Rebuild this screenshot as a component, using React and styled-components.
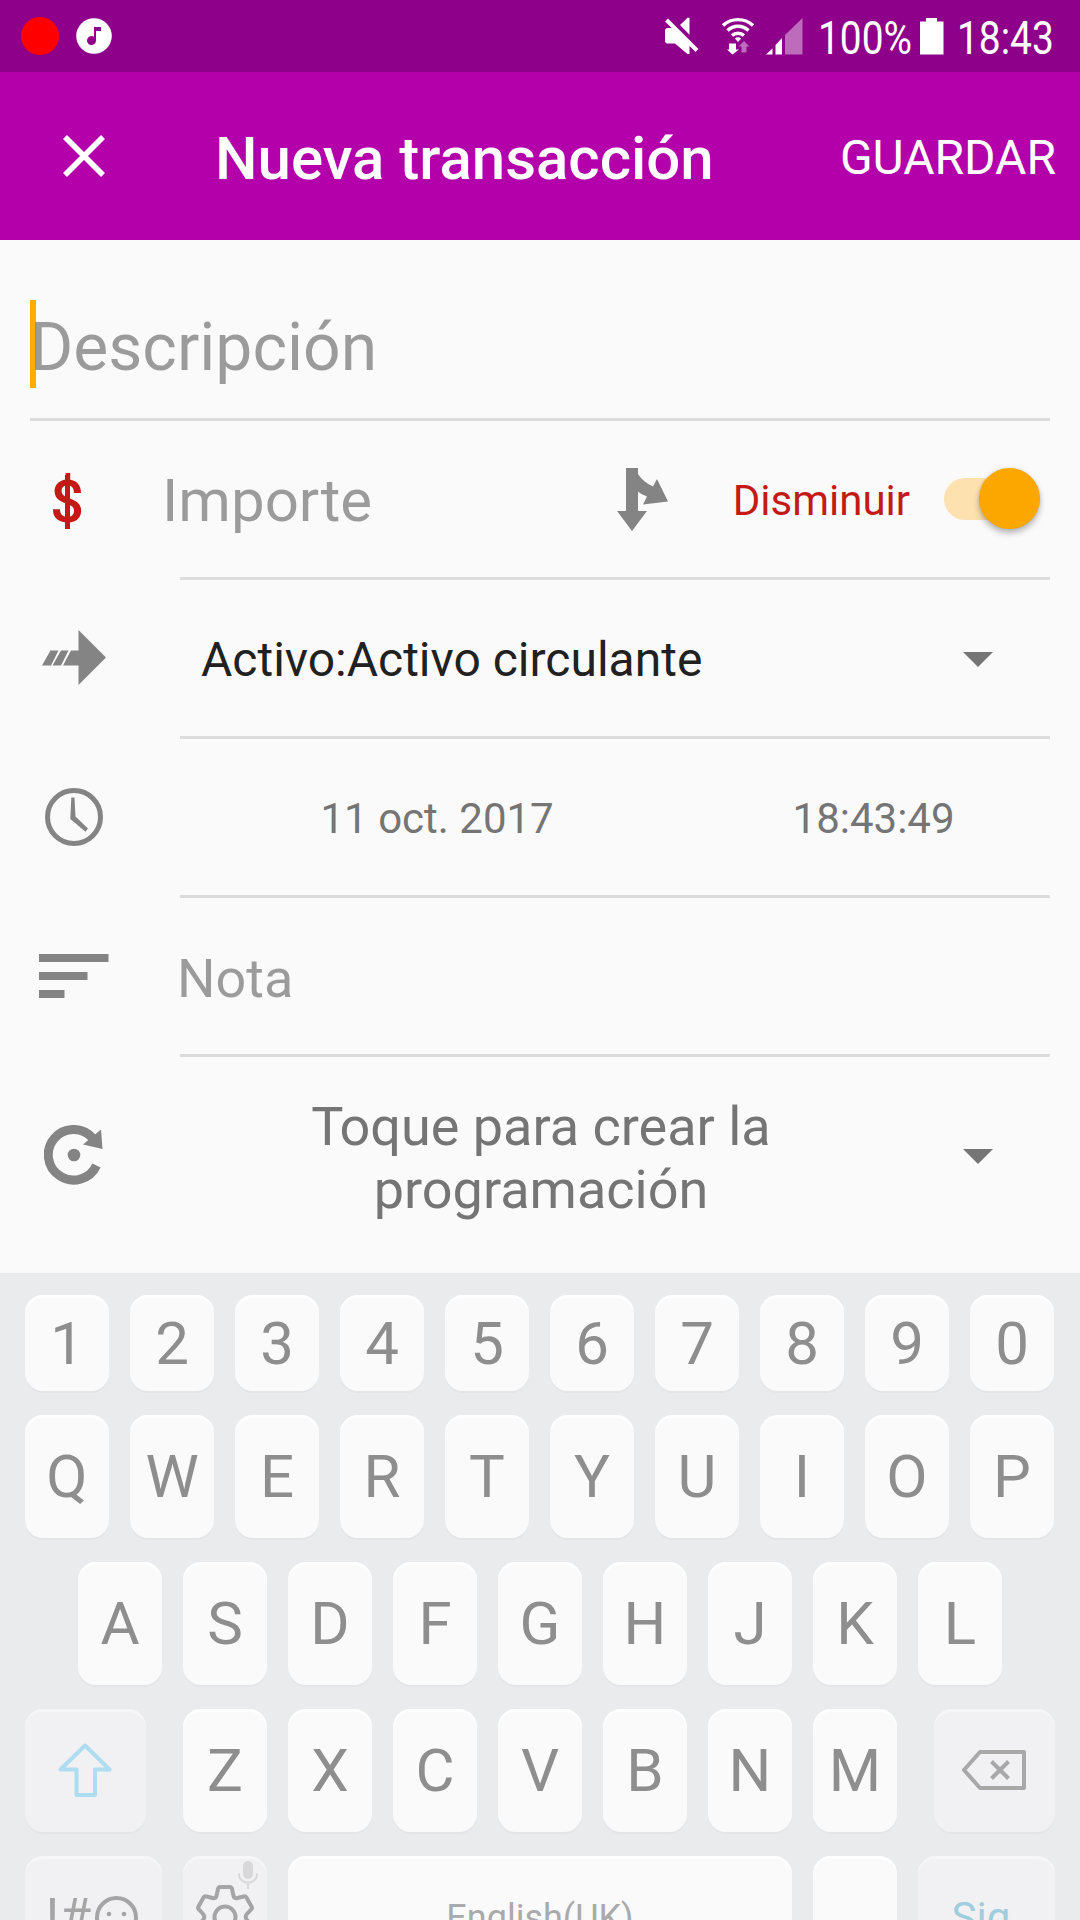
import React from "react";
import styled, { createGlobalStyle } from "styled-components";

const GlobalStyle = createGlobalStyle`
  * { box-sizing: border-box; }
  html, body { margin: 0; padding: 0; overflow: hidden; }
  body { font-family: Roboto, "Liberation Sans", sans-serif; background: #fafafa; }
  button { border: 0; padding: 0; margin: 0; background: none; font-family: inherit; color: inherit; }
  svg { display: block; flex: none; }
`;

const Screen = styled.div`
  width: 1080px;
  height: 1920px;
  overflow: hidden;
  display: flex;
  flex-direction: column;
  background: #fafafa;
`;

const StatusBar = styled.header`
  flex: none;
  height: 72px;
  padding: 0 26px 0 21px;
  display: flex;
  align-items: center;
  justify-content: space-between;
  background: #8e008a;
  color: #fff;
`;

const StatusGroup = styled.div`
  display: flex;
  align-items: center;
`;

const StatusItem = styled.span`
  display: flex;
  margin-right: ${(p) => p.$after}px;
`;

const RecordDot = styled.span`
  width: 38px;
  height: 38px;
  margin-right: 17px;
  border-radius: 50%;
  background: #f00;
`;

const StatusText = styled.span`
  width: ${(p) => p.$width}px;
  font-size: 46px;
  line-height: 72px;
  white-space: nowrap;
  transform: translateY(2px) scaleX(0.845);
  transform-origin: left center;
`;

const AppBar = styled.div`
  flex: none;
  height: 168px;
  padding: 0 24px 0 63px;
  display: flex;
  align-items: center;
  background: #b300aa;
  color: #fff;
`;

const Title = styled.h1`
  flex: 1;
  margin: 0 0 0 110px;
  padding-top: 6px;
  font-size: 60px;
  font-weight: 500;
  line-height: 70px;
  white-space: nowrap;
`;

const SaveButton = styled.button`
  font-size: 48px;
  line-height: 56px;
  padding-top: 4px;
`;

const Form = styled.main`
  flex: none;
  height: 1033px;
  padding: 0 30px;
  display: flex;
  flex-direction: column;
`;

const DescriptionField = styled.div`
  height: 181px;
  padding-top: 60px;
  display: flex;
  align-items: flex-start;
  border-bottom: 3px solid #dcdcdc;
`;

const Caret = styled.i`
  flex: none;
  width: 6px;
  height: 88px;
  margin-right: -6px;
  background: #ffab00;
`;

const Hint = styled.span`
  font-size: ${(p) => p.$size}px;
  line-height: ${(p) => p.$line}px;
  color: rgba(0, 0, 0, 0.38);
`;

const Row = styled.section`
  height: ${(p) => p.$height || 159}px;
  padding-bottom: ${(p) => p.$foot || 0}px;
  display: flex;
`;

const IconCell = styled.div`
  flex: none;
  width: 150px;
  display: flex;
  align-items: center;
  padding-left: ${(p) => p.$left}px;
  padding-bottom: 3px;
`;

const Field = styled.div`
  flex: 1;
  display: flex;
  align-items: center;
  border-bottom: ${(p) => (p.$last ? "0" : "3px solid #dcdcdc")};
`;

const CurrencySign = styled.span`
  display: grid;
  place-items: center;
  padding-top: 5px;
  font-size: 60px;
  font-weight: 500;
  line-height: 70px;
  color: #c41a16;
  &::before {
    content: "";
    grid-area: 1 / 1;
    width: 5px;
    height: 54px;
    background: currentColor;
  }
`;

const CurrencyGlyph = styled.span`
  grid-area: 1 / 1;
`;

const AmountHint = styled(Hint)`
  flex: 1;
  margin-left: -18px;
  padding-top: 4px;
`;

const NoteHint = styled(Hint)`
  margin-left: -3px;
  padding-top: 5px;
`;

const SplitButton = styled.button`
  display: flex;
  margin: 2px -1px 0 1px;
`;

const TypeLabel = styled.span`
  margin-left: 65px;
  padding-top: 3px;
  font-size: 42px;
  line-height: 50px;
  color: #c41a16;
`;

const Switch = styled.button`
  flex: none;
  display: flex;
  align-items: center;
  justify-content: flex-end;
  width: 96px;
  height: 42px;
  margin: 0 10px 0 34px;
  padding-bottom: 2px;
  border-radius: 21px;
  background: #fde2b0;
`;

const Thumb = styled.span`
  width: 61px;
  height: 61px;
  flex: none;
  border-radius: 50%;
  background: #fba700;
  box-shadow: 0 4px 6px rgba(0, 0, 0, 0.28), 0 0 3px rgba(0, 0, 0, 0.1);
`;

const AccountName = styled.span`
  flex: 1;
  padding-left: 21px;
  padding-top: 3px;
  font-size: 48px;
  line-height: 56px;
  color: #212121;
`;

const DropArrow = styled.span`
  flex: none;
  margin-right: 57px;
  margin-top: ${(p) => p.$top || 0}px;
  border: 15px solid transparent;
  border-top-color: #757575;
  border-bottom: 0;
`;

const DateText = styled.span`
  flex: ${(p) => p.$grow} 0 0;
  padding: 3px 0 0 ${(p) => p.$left || 0}px;
  text-align: center;
  font-size: 42px;
  line-height: 50px;
  color: #757575;
`;

const Schedule = styled.span`
  flex: 1;
  padding: 2px 61px 0 0;
  font-size: 54px;
  line-height: 63px;
  text-align: center;
  color: #757575;
  &::first-letter {
    letter-spacing: -4px;
  }
`;

const Keyboard = styled.section`
  flex: none;
  height: 647px;
  padding: 22px 25px 0;
  display: flex;
  flex-direction: column;
  gap: 24px;
  background: #eaebed;
`;

const KeyRow = styled.div`
  flex: none;
  display: flex;
  justify-content: ${(p) => p.$justify || "center"};
  gap: ${(p) => (p.$justify === "space-between" ? 0 : 21)}px;
  height: ${(p) => p.$height || 123}px;
`;

const Letters = styled.div`
  display: flex;
  gap: 21px;
`;

const Key = styled.button`
  flex: none;
  display: flex;
  align-items: center;
  justify-content: center;
  width: ${(p) => p.$width || 84}px;
  height: 100%;
  padding-top: ${(p) => p.$drop || 0}px;
  border-radius: 18px;
  font-size: ${(p) => p.$size || 60}px;
  line-height: 70px;
  color: ${(p) => p.$ink || "#8e8e8e"};
  background: ${(p) => (p.$soft ? "#f1f1f3" : "#fafafa")};
  box-shadow: 0 2px 0 #e4e5e7, inset 0 3px 1px rgba(255, 255, 255, ${(p) => (p.$soft ? 0.4 : 0.8)});
`;

const IconKey = styled(Key)`
  padding: 0 2px 2px 0;
`;

const SymbolsKey = styled(Key)`
  gap: 4px;
  padding-right: 3px;
`;

const SettingsKey = styled(Key)`
  flex-direction: column;
  align-items: stretch;
  justify-content: flex-start;
  padding: 5px 9px 0 12px;
`;

const MicSlot = styled.span`
  display: flex;
  justify-content: flex-end;
  height: 24px;
`;

const MusicIcon = () => (
  <svg width="36" height="36" viewBox="0 0 36 36">
    <circle cx="18" cy="18" r="17.8" fill="#fff" />
    <path d="M18 9h7v4h-5v9.5a4.5 4.5 0 1 1-2-3.7z" fill="#8e008a" />
  </svg>
);

const MuteIcon = () => (
  <svg width="34" height="38" viewBox="0 0 34 38" fill="#fff">
    <path d="M1.800 11H10l14.500 14.500V37h-2L10 26.500H1.800L0 25V12.800z" />
    <path d="M15 8l7.500-7.200h2v17z" />
    <path d="M1.500 3L32 33.500" stroke="#fff" strokeWidth="4" />
  </svg>
);

const WifiIcon = () => (
  <svg width="32" height="38" viewBox="0 0 32 38" fill="none" stroke="#fff" strokeWidth="3.4">
    <path d="M1 8.500a22 22 0 0 1 30 0M5.500 13.500a15 15 0 0 1 21 0M10 18.500a9 9 0 0 1 12 0" />
    <path d="M16 25l-3.200-3.500q3.200-2.500 6.400 0z" fill="#fff" stroke="none" />
    <path d="M7 26.500h7v6h3L10.500 37.500 5 32.500h2z" fill="#fff" stroke="none" />
    <path d="M19.500 35.500v-6h-3L22 24l5.500 5.500h-3v6z" fill="#fff" opacity=".42" stroke="none" />
  </svg>
);

const SignalIcon = () => (
  <svg width="37" height="37" viewBox="0 0 37 37" fill="#fff">
    <path d="M0 36.500L6.500 30.500v6zM9.500 27l6.500-7v16.500H9.500z" />
    <path d="M19 17L36.500 0v36.500H19z" opacity=".42" />
  </svg>
);

const BatteryIcon = () => (
  <svg width="24" height="37" viewBox="0 0 24 37" fill="#fff">
    <path d="M6 0h11v3.500h6.500v33H0v-33H6z" />
  </svg>
);

const CloseIcon = () => (
  <svg width="42" height="42" viewBox="0 0 42 42" stroke="#fff" strokeWidth="5.600">
    <path d="M2 2l38 38M40 2L2 40" />
  </svg>
);

const SplitIcon = () => (
  <svg width="52" height="64" viewBox="0 0 52 64" fill="#848484">
    <path d="M9 0h12v6c4 6 9 10 15 12.500L40 11l11 22.500-25 3 4-8c-4-1.500-6.500-3-9-5V43h9L15 63 0 43h9z" />
  </svg>
);

const TransferIcon = () => (
  <svg width="64" height="56" viewBox="0 0 64 56" fill="#848484">
    <path d="M8.500 20.500h8L9 35.500H0zM19 20.500h7.500l-7.500 15h-8.500zM29 20.500h7.500V0L64 27.500 36.500 55V35.500h-15.500z" />
  </svg>
);

const ClockIcon = () => (
  <svg width="58" height="58" viewBox="0 0 58 58">
    <circle cx="29" cy="29" r="26.500" fill="none" stroke="#848484" strokeWidth="5" />
    <path d="M26.300 9.500h3.200l1 19 12.500 12-2.500 3.200L25.300 31z" fill="#848484" />
  </svg>
);

const NotesIcon = () => (
  <svg width="70" height="44" viewBox="0 0 70 44" fill="#848484">
    <path d="M0 0h69.500v8H0zM0 18h48.500v8H0zM0 36h25.500v8H0z" />
  </svg>
);

const RepeatIcon = () => (
  <svg width="60" height="60" viewBox="0 0 60 60">
    <path d="M52.500 40.500A25.300 25.300 0 1 1 49 13.500" fill="none" stroke="#848484" strokeWidth="9" />
    <path d="M57 4.500l1.500 19.500-19.500-4.500z" fill="#848484" />
    <circle cx="30" cy="30" r="6.300" fill="#848484" />
  </svg>
);

const ShiftIcon = () => (
  <svg width="54" height="54" viewBox="0 0 54 54" fill="none" stroke="#aedcf0" strokeWidth="4" strokeLinejoin="round">
    <path d="M27 2.500L51.500 26.500H37v25.500H18.500V26.500H2.500z" />
  </svg>
);

const BackspaceIcon = () => (
  <svg width="66" height="42" viewBox="0 0 66 42" fill="none" stroke="#a8a8a8" strokeWidth="4" strokeLinejoin="round">
    <path d="M19 3h44v36H19L3 21zM30.500 12.500l17 17M47.500 12.500l-17 17" />
  </svg>
);

const SmileIcon = () => (
  <svg width="43" height="43" viewBox="0 0 43 43" fill="none" stroke="#a5a5a5" strokeWidth="4">
    <circle cx="21.500" cy="21.500" r="19.500" />
    <path d="M12 27q9.500 8 19 0" />
    <circle cx="14" cy="18" r="2.300" fill="#a5a5a5" stroke="none" />
    <circle cx="29" cy="18" r="2.300" fill="#a5a5a5" stroke="none" />
  </svg>
);

const MicIcon = () => (
  <svg width="20" height="29" viewBox="0 0 20 29" fill="none" stroke="#d8d8d8" strokeWidth="2">
    <rect x="5" y="0" width="10" height="18" rx="5" fill="#d8d8d8" stroke="none" />
    <path d="M1 12.500v1a9 8 0 0 0 18 0v-1M10 21.500V28" />
  </svg>
);

const GearIcon = () => (
  <svg width="60" height="64" viewBox="0 0 60 64" fill="none" stroke="#a5a5a5" strokeWidth="4" strokeLinejoin="round">
    <path d="M23 4q.5-2 2-2h10q1.500 0 2 2l1.500 7q1 3 4 2l6-1.500q2-.5 3 1l5 9q1 2-.5 3l-4.500 5q-1.500 2.500 0 5l4.500 5q1.500 1 .5 3l-5 9q-1 1.500-3 1l-6-1.500q-3-1-4 2l-1.500 7q-.5 2-2 2H25q-1.500 0-2-2l-1.500-7q-1-3-4-2l-6 1.500q-2 .5-3-1l-5-9q-1-2 .5-3l4.500-5q1.500-2.500 0-5l-4.500-5q-1.500-1-.5-3l5-9q1-1.500 3-1l6 1.500q3 1 4-2z" />
    <circle cx="30" cy="32" r="10.500" />
  </svg>
);

const renderKeys = (text) => [...text].map((c) => <Key key={c} $drop={1}>{c}</Key>);

export default function App() {
  return (
    <>
      <GlobalStyle />
      <Screen>
        <StatusBar>
          <StatusGroup>
            <RecordDot />
            <MusicIcon />
          </StatusGroup>
          <StatusGroup>
            <StatusItem $after={23}><MuteIcon /></StatusItem>
            <StatusItem $after={12}><WifiIcon /></StatusItem>
            <StatusItem $after={15}><SignalIcon /></StatusItem>
            <StatusItem $after={11}><StatusText $width={91}>100%</StatusText></StatusItem>
            <StatusItem $after={13}><BatteryIcon /></StatusItem>
            <StatusText $width={97}>18:43</StatusText>
          </StatusGroup>
        </StatusBar>

        <AppBar>
          <CloseIcon />
          <Title>Nueva transacción</Title>
          <SaveButton>GUARDAR</SaveButton>
        </AppBar>

        <Form>
          <DescriptionField>
            <Caret />
            <Hint $size={66} $line={96}>Descripción</Hint>
          </DescriptionField>

          <Row>
            <IconCell $left={20}>
              <CurrencySign><CurrencyGlyph>$</CurrencyGlyph></CurrencySign>
            </IconCell>
            <Field>
              <AmountHint $size={60} $line={70}>Importe</AmountHint>
              <SplitButton><SplitIcon /></SplitButton>
              <TypeLabel>Disminuir</TypeLabel>
              <Switch><Thumb /></Switch>
            </Field>
          </Row>

          <Row>
            <IconCell $left={12}><TransferIcon /></IconCell>
            <Field>
              <AccountName>Activo:Activo circulante</AccountName>
              <DropArrow $top={3} />
            </Field>
          </Row>

          <Row>
            <IconCell $left={15}><ClockIcon /></IconCell>
            <Field>
              <DateText $grow={516}>11 oct. 2017</DateText>
              <DateText $grow={354} $left={3}>18:43:49</DateText>
            </Field>
          </Row>

          <Row>
            <IconCell $left={9}><NotesIcon /></IconCell>
            <Field>
              <NoteHint $size={54} $line={63}>Nota</NoteHint>
            </Field>
          </Row>

          <Row $height={216} $foot={17}>
            <IconCell $left={14}><RepeatIcon /></IconCell>
            <Field $last>
              <Schedule>Toque para crear la<br />programación</Schedule>
              <DropArrow />
            </Field>
          </Row>
        </Form>

        <Keyboard>
          <KeyRow $height={96} $justify="flex-start">{renderKeys("1234567890")}</KeyRow>
          <KeyRow $justify="flex-start">{renderKeys("QWERTYUIOP")}</KeyRow>
          <KeyRow>{renderKeys("ASDFGHJKL")}</KeyRow>
          <KeyRow $justify="space-between">
            <IconKey $soft $width={121}><ShiftIcon /></IconKey>
            <Letters>{renderKeys("ZXCVBNM")}</Letters>
            <IconKey $soft $width={121}><BackspaceIcon /></IconKey>
          </KeyRow>
          <KeyRow>
            <SymbolsKey $soft $width={137} $size={52} $ink="#a5a5a5">!#<SmileIcon /></SymbolsKey>
            <SettingsKey $soft>
              <MicSlot><MicIcon /></MicSlot>
              <GearIcon />
            </SettingsKey>
            <Key $width={504} $size={36} $ink="#aaaaaa">English(UK)</Key>
            <Key />
            <Key $soft $width={137} $size={42} $ink="#a0cddd">Sig.</Key>
          </KeyRow>
        </Keyboard>
      </Screen>
    </>
  );
}
